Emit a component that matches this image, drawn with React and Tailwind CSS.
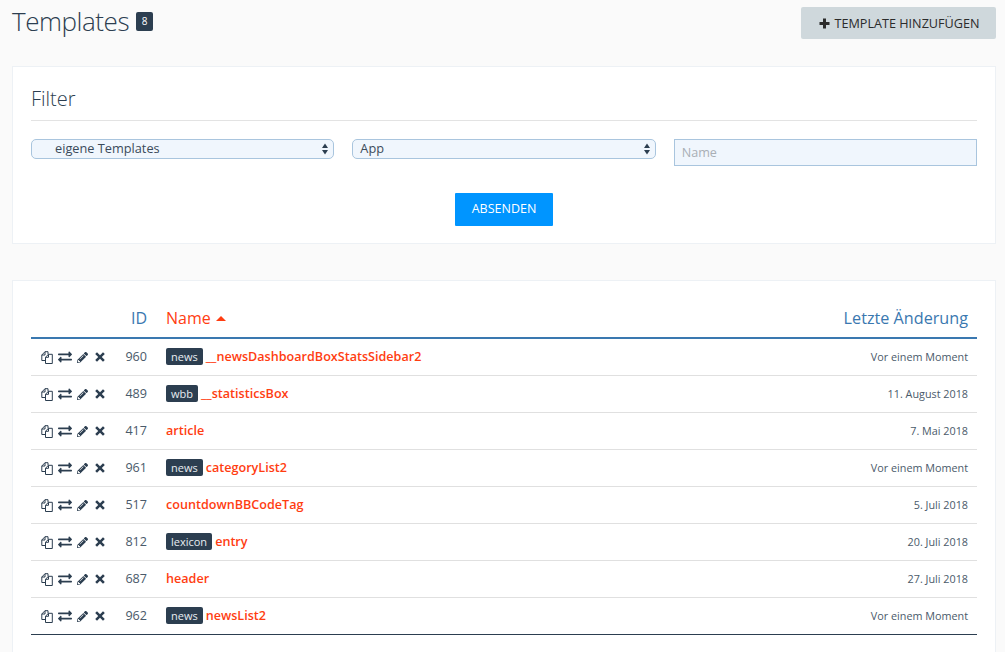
import React from 'react';
import { FaExchangeAlt, FaPencilAlt } from 'react-icons/fa';

const rows = [
    { id: 960, tag: 'news', name: '__newsDashboardBoxStatsSidebar2', date: 'Vor einem Moment' },
    { id: 489, tag: 'wbb', name: '__statisticsBox', date: '11. August 2018' },
    { id: 417, name: 'article', date: '7. Mai 2018' },
    { id: 961, tag: 'news', name: 'categoryList2', date: 'Vor einem Moment' },
    { id: 517, name: 'countdownBBCodeTag', date: '5. Juli 2018' },
    { id: 812, tag: 'lexicon', name: 'entry', date: '20. Juli 2018' },
    { id: 687, name: 'header', date: '27. Juli 2018' },
    { id: 962, tag: 'news', name: 'newsList2', date: 'Vor einem Moment' },
];

const CopyIcon = () => (
    <svg width="12" height="13" viewBox="0 0 12 13" fill="none" stroke="#2c3e50" strokeWidth="1">
        <path d="M4.5 9.5H.8V4L4 .7h3v2.6" />
        <path d="M4 .7V4H.8" />
        <path d="M4.5 6.2L7.5 3.3h3.8v9.2H4.5z" />
        <path d="M7.5 3.3v3H4.5" />
    </svg>
);

const CrossIcon = () => (
    <svg className="ml-[7px]" width="10" height="10" viewBox="0 0 10 10" fill="#2c3e50">
        <path d="M2 .3L5 3.2 8 .3 9.8 2 6.8 5l3 3L8 9.8l-3-3-3 3L.2 8l3-3-3-3z" />
    </svg>
);

const PlusIcon = () => (
    <svg width="11" height="11" viewBox="0 0 11 11" fill="#2b2b2b">
        <path d="M4 .5h3V4h3.5v3H7v3.5H4V7H.5V4H4z" />
    </svg>
);

const SelectBox = ({ value, pad }) => (
    <div className={`relative h-5 rounded-[5px] border border-[#a9c5de] bg-[#f0f6fd] flex items-center text-[12.75px] text-[#3a4a5a] ${pad}`}>
        {value}
        <svg className="absolute right-[4px] top-[2px]" width="8" height="14" viewBox="0 0 8 14" fill="#2c3e50">
            <path d="M4 1.5l3 4.5H1z" />
            <path d="M4 12.5L7 8H1z" />
        </svg>
    </div>
);

const App = () => {
    return (
        <div className="w-[1005px] h-[652px] overflow-hidden bg-[#fafafa] font-['Open_Sans',sans-serif] text-[#3a4a5a]">
            <div className="h-[66px] pl-3 pr-[9px] pt-[6px] flex justify-between items-start">
                <div className="flex items-start">
                    <h1 className="text-[26px] tracking-[-0.45px] font-light leading-[30px] text-[#2c3e50]">Templates</h1>
                    <span className="ml-[7px] mt-[6px] w-[17px] h-[19px] rounded-[2px] bg-[#2c3e50] text-white text-[10px] flex items-center justify-center">8</span>
                </div>
                <button className="w-[195px] h-8 mt-[1px] pl-[2px] rounded-[2px] bg-[#cfd8dc] text-[12.65px] text-[#2b2b2b] flex items-center justify-center gap-[4px]">
                    <PlusIcon />
                    TEMPLATE HINZUFÜGEN
                </button>
            </div>

            <div className="mx-3 w-[984px] h-[178px] border border-[#edf1f5] bg-white px-[18px] pt-[18px]">
                <h2 className="text-[20px] font-light leading-[28px] text-[#2c3e50] pb-[7px] border-b border-[#e3e3e3]">Filter</h2>
                <div className="grid grid-cols-3 items-start gap-[18px] mt-[18px]">
                    <SelectBox value="eigene Templates" pad="pl-[23px]" />
                    <SelectBox value="App" pad="pl-[7px]" />
                    <input
                        className="w-full h-[27px] border border-[#a9c5de] bg-[#f0f6fd] pl-[7px] pb-[1px] text-[12.6px] placeholder:text-[#a9afb5]"
                        placeholder="Name"
                    />
                </div>
                <div className="flex justify-center mt-[27px]">
                    <button className="w-[98px] h-[33px] rounded-[1px] bg-[#0095ff] text-white text-[12.5px]">ABSENDEN</button>
                </div>
            </div>

            <div className="mx-3 mt-[36px] w-[984px] h-[400px] border border-[#edf1f5] bg-white px-[18px] pt-[18px]">
                <div className="h-[40px] flex items-center border-b-2 border-[#3a78b0] text-[16px]">
                    <div className="w-[116px] text-right text-[#3a78b0]">ID</div>
                    <div className="ml-[19px] flex-1 flex items-center gap-[5px] text-[#ff3d11]">
                        Name
                        <svg width="10" height="5" viewBox="0 0 10 5" fill="#ff3d11"><path d="M5 0l5 5H0z" /></svg>
                    </div>
                    <div className="pr-[9px] text-[16.2px] text-[#3a78b0]">Letzte Änderung</div>
                </div>
                {rows.map((row) => (
                    <div key={row.id} className="h-[37px] flex items-center border-b border-[#e0e0e0] last:border-[#2c3e50]">
                        <div className="w-[85px] pl-[10px] flex items-center text-[#2c3e50]">
                            <CopyIcon />
                            <FaExchangeAlt className="ml-[5px] text-[14px]" />
                            <FaPencilAlt className="ml-[5px] text-[11px]" />
                            <CrossIcon />
                        </div>
                        <div className="w-[31px] text-right text-[12.6px] text-[#4a5a6a]">{row.id}</div>
                        <div className="ml-[19px] flex-1 flex items-center gap-[3px]">
                            {row.tag && (
                                <span className="h-[17px] px-[5px] rounded-[2px] bg-[#2c3e50] text-[#e8edf2] text-[11px] leading-[18px]">{row.tag}</span>
                            )}
                            <span className="text-[12.6px] font-semibold text-[#ff3d11]">{row.name}</span>
                        </div>
                        <div className="pr-[9px] text-[10.8px] text-[#4a5a6a]">{row.date}</div>
                    </div>
                ))}
            </div>
        </div>
    );
};

export default App;
